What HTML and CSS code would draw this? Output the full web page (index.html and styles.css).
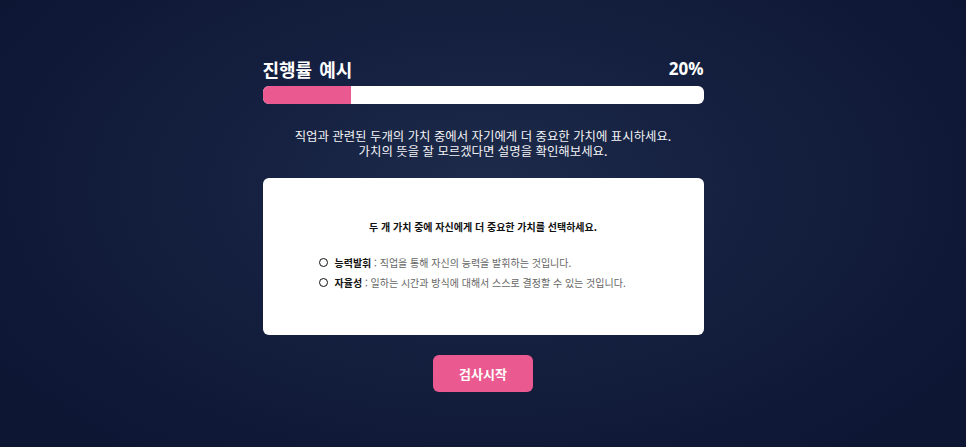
FILE: index.html
```html
<!DOCTYPE html>
<html lang="ko">
<head>
<meta charset="utf-8">
<link rel="stylesheet" href="styles.css">
</head>
<body>
<main class="page">
  <div class="wrap">
    <div class="head">
      <h1 class="title">진행률 예시</h1>
      <span class="pct">20%</span>
    </div>
    <div class="bar"><div class="fill" style="width:20%"></div></div>
    <p class="intro">직업과 관련된 두개의 가치 중에서 자기에게 더 중요한 가치에 표시하세요.<br>가치의 뜻을 잘 모르겠다면 설명을 확인해보세요.</p>
    <section class="card">
      <p class="q">두 개 가치 중에 자신에게 더 중요한 가치를 선택하세요.</p>
      <ul class="opts">
        <li class="opt"><span class="radio"></span><b>능력발휘</b><span class="desc"> : 직업을 통해 자신의 능력을 발휘하는 것입니다.</span></li>
        <li class="opt"><span class="radio"></span><b>자율성</b><span class="desc"> : 일하는 시간과 방식에 대해서 스스로 결정할 수 있는 것입니다.</span></li>
      </ul>
    </section>
    <div class="actions"><button class="start">검사시작</button></div>
  </div>
</main>
</body>
</html>
```

FILE: styles.css
```css
html, body {
  margin: 0;
  height: 100%;
}
body {
  background: radial-gradient(ellipse 60% 75% at 50% 42%, #1e2b4a 0%, #152040 45%, #0d1633 100%);
  font-family: "Noto Sans CJK KR", "Noto Sans", sans-serif;
  color: #fff;
  overflow: hidden;
}
.page {
  display: flex;
  justify-content: center;
  padding-top: 57px;
}
.wrap {
  width: 441px;
}
.head {
  display: flex;
  justify-content: space-between;
  align-items: center;
  height: 24px;
  margin-bottom: 5px;
}
.title {
  margin: 0;
  font-size: 18px;
  font-weight: 700;
  line-height: 24px;
  word-spacing: 2px;
}
.pct {
  font-family: "Open Sans", "Noto Sans", sans-serif;
  font-size: 17px;
  font-weight: 700;
  line-height: 24px;
}
.bar {
  height: 18px;
  background: #fff;
  border-radius: 6px;
  overflow: hidden;
}
.fill {
  height: 100%;
  background: #ea5a90;
}
.intro {
  margin: 25px 0 19px;
  text-align: center;
  font-size: 12.4px;
  line-height: 15px;
  color: #f2f3f6;
}
.card {
  background: #fff;
  border-radius: 6px;
  height: 157px;
  box-sizing: border-box;
  padding: 42px 0 0 56px;
  color: #222;
}
.q {
  margin: 0 56px 18px 0;
  text-align: center;
  font-size: 10px;
  font-weight: 700;
  line-height: 14px;
  color: #111;
}
.opts {
  list-style: none;
  margin: 0;
  padding: 0;
}
.opt {
  display: flex;
  align-items: center;
  height: 20px;
  font-size: 10px;
}
.opt b {
  color: #111;
  font-weight: 700;
}
.desc {
  color: #666;
  white-space: pre;
}
.radio {
  width: 7px;
  height: 7px;
  border: 1.6px solid #111;
  border-radius: 50%;
  margin-right: 7px;
}
.actions {
  display: flex;
  justify-content: center;
  margin-top: 20px;
}
.start {
  width: 100px;
  height: 37px;
  border: 0;
  border-radius: 6px;
  background: #ea5a90;
  color: #fff;
  font-family: "Noto Sans CJK KR", sans-serif;
  font-size: 13px;
  font-weight: 700;
  padding: 0;
}
```
